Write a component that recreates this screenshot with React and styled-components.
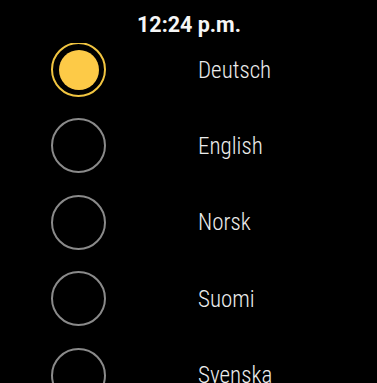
import React from "react";
import styled, { createGlobalStyle } from "styled-components";

const Global = createGlobalStyle`
  html, body { margin: 0; padding: 0; background: #000; }
  body { width: 377px; height: 383px; overflow: hidden; }
  #root { width: 377px; height: 383px; }
`;

const Screen = styled.div`
  width: 377px;
  height: 383px;
  background: #000;
  display: flex;
  flex-direction: column;
  overflow: hidden;
  font-family: "Roboto Condensed", Roboto, "Liberation Sans", sans-serif;
`;

const Header = styled.div`
  height: 43px;
  flex: none;
  box-sizing: border-box;
  padding-top: 12px;
  text-align: center;
  color: #f6f6f6;
  font-family: Roboto, "Liberation Sans", sans-serif;
  font-size: 21.5px;
  font-weight: 700;
  line-height: normal;
  padding-left: 1px;
`;

const List = styled.div`
  flex: 1;
  overflow: hidden;
`;

const Inner = styled.div`
  margin-top: -11.7px;
  display: flex;
  flex-direction: column;
`;

const Row = styled.div`
  height: 76.4px;
  display: flex;
  align-items: center;
  padding-left: 51px;
`;

const Radio = styled.div`
  width: 55px;
  height: 55px;
  box-sizing: border-box;
  border-radius: 50%;
  border: 2px solid ${(p) => (p.$on ? "#f1c541" : "#8a8a8a")};
  display: flex;
  align-items: center;
  justify-content: center;
  flex: none;
`;

const Dot = styled.div`
  width: 40px;
  height: 40px;
  border-radius: 50%;
  background: #fdca47;
`;

const Label = styled.div`
  margin-left: 92px;
  color: #ececec;
  font-size: 23px;
  font-weight: 300;
  margin-top: 1px;
`;

const langs = ["Deutsch", "English", "Norsk", "Suomi", "Svenska"];

export default function App() {
  return (
    <>
      <Global />
      <Screen>
        <Header>12:24 p.m.</Header>
        <List>
          <Inner>
            {langs.map((l, i) => (
              <Row key={l}>
                <Radio $on={i === 0}>{i === 0 && <Dot />}</Radio>
                <Label>{l}</Label>
              </Row>
            ))}
          </Inner>
        </List>
      </Screen>
    </>
  );
}
